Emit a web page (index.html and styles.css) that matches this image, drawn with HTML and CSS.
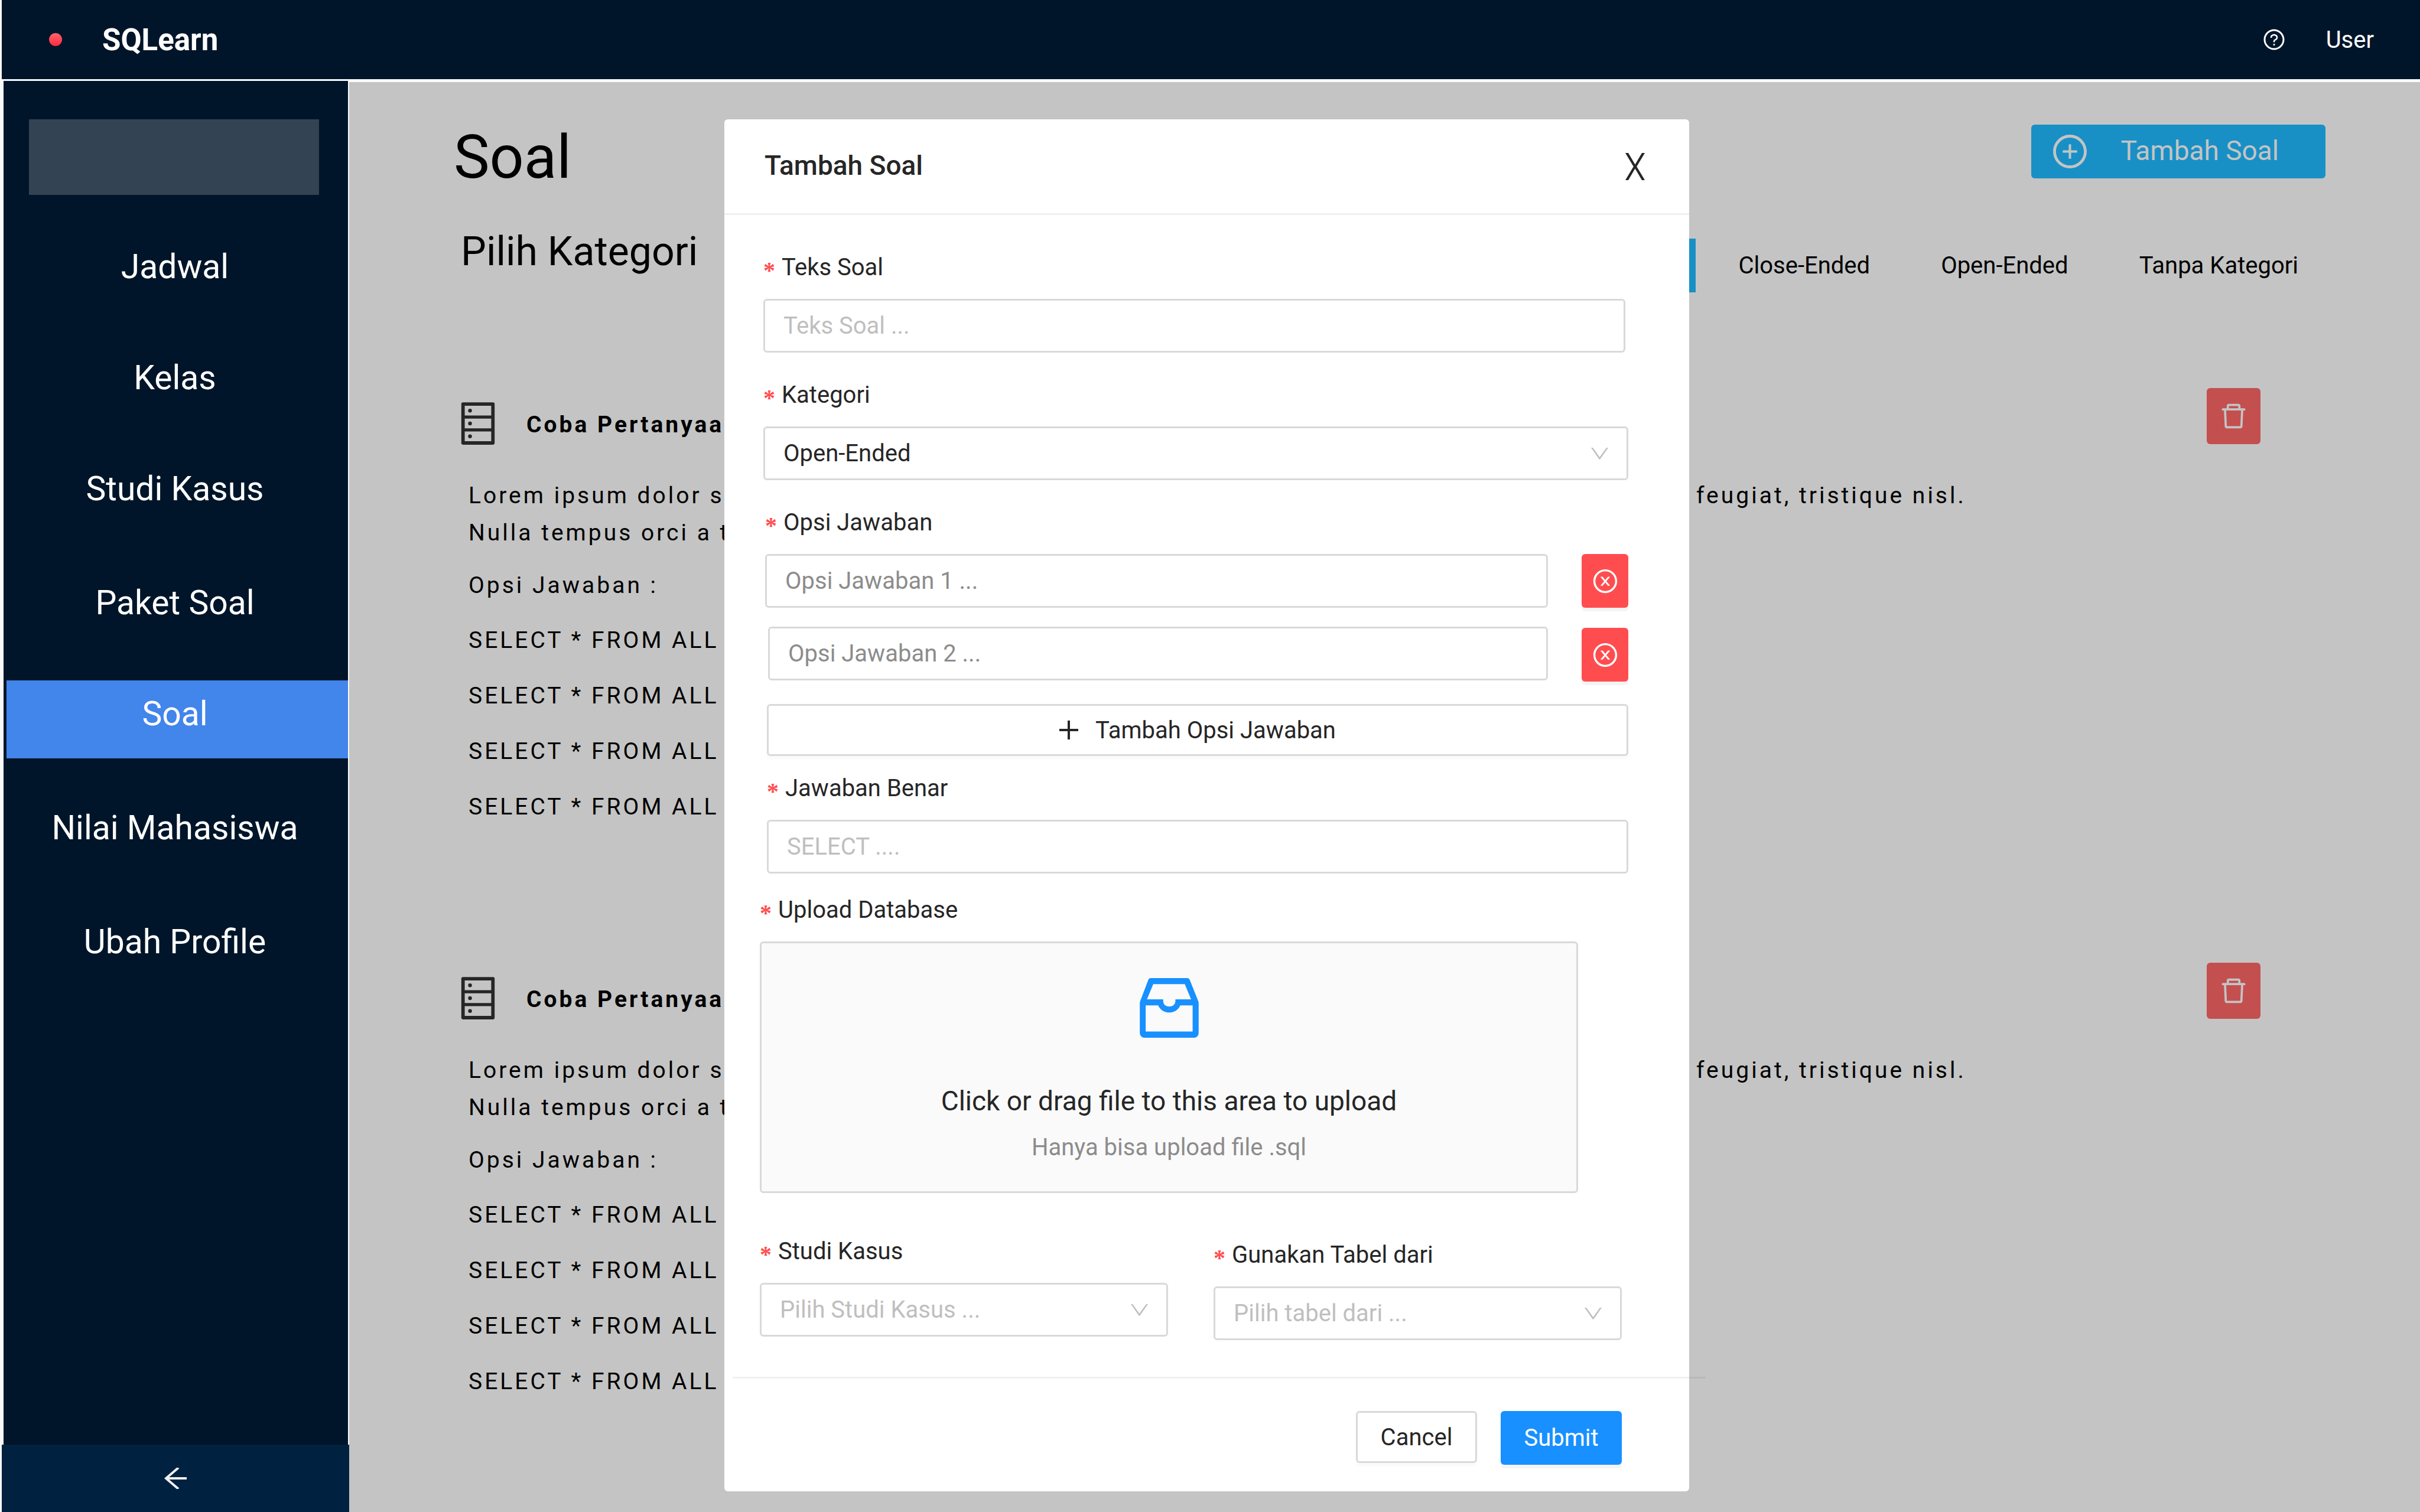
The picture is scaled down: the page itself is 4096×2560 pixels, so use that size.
FILE: index.html
```html
<!DOCTYPE html>
<html lang="id">
<head>
  <meta charset="utf-8">
  <meta name="viewport" content="width=device-width, initial-scale=1">
  <title>SQLearn - Soal</title>
  <link rel="stylesheet" href="styles.css">
</head>
<body>
  <svg class="sprite" aria-hidden="true">
    <symbol id="ring" viewBox="0 0 1024 1024"><path d="M512 64C264.600 64 64 264.600 64 512s200.600 448 448 448 448-200.600 448-448S759.400 64 512 64zm0 820c-205.400 0-372-166.600-372-372s166.600-372 372-372 372 166.600 372 372-166.600 372-372 372z"/></symbol>
    <symbol id="icon-database" viewBox="0 0 1024 1024"><path d="M832 64H192c-17.700 0-32 14.300-32 32v832c0 17.700 14.300 32 32 32h640c17.700 0 32-14.300 32-32V96c0-17.700-14.300-32-32-32zm-600 72h560v208H232V136zm560 480H232V408h560v208zm0 272H232V680h560v208zM304 240a40 40 0 1 0 80 0 40 40 0 1 0-80 0zm0 272a40 40 0 1 0 80 0 40 40 0 1 0-80 0zm0 272a40 40 0 1 0 80 0 40 40 0 1 0-80 0z"/></symbol>
    <symbol id="icon-delete" viewBox="0 0 1024 1024"><path d="M360 184h-8c4.400 0 8-3.600 8-8v8h304v-8c0 4.400 3.600 8 8 8h-8v72h72v-80c0-35.300-28.700-64-64-64H352c-35.300 0-64 28.700-64 64v80h72v-72zm504 72H160c-17.700 0-32 14.300-32 32v32c0 4.400 3.600 8 8 8h60.400l24.700 523c1.600 34.100 29.800 61 63.900 61h454c34.200 0 62.300-26.800 63.900-61l24.700-523H888c4.400 0 8-3.600 8-8v-32c0-17.700-14.300-32-32-32zM731.300 840H292.700l-24.200-512h487l-24.200 512z"/></symbol>
    <symbol id="icon-close-circle" viewBox="0 0 1024 1024"><use href="#ring"/><path d="M685.400 354.800c0-4.400-3.600-8-8-8l-66 .3L512 465.600l-99.300-118.400-66.100-.3c-4.400 0-8 3.500-8 8 0 1.900.7 3.700 1.900 5.200l130.100 155L340.500 670c-1.200 1.500-1.900 3.300-1.900 5.200 0 4.400 3.600 8 8 8l66.100-.3L512 564.400l99.300 118.400 66 .3c4.400 0 8-3.500 8-8 0-1.900-.7-3.700-1.900-5.200L553.500 515l130.100-155c1.200-1.400 1.800-3.300 1.800-5.200z"/></symbol>
    <symbol id="icon-down" viewBox="0 0 29 20"><path d="M0 0H3L14.500 16 26 0H29L15.500 19.300Q14.500 20.500 13.500 19.300z"/></symbol>
  </svg>

  <header class="topbar">
    <span class="topbar__dot"></span>
    <span class="topbar__brand">SQLearn</span>
    <a class="topbar__help" href="#bantuan" aria-label="Bantuan">
      <svg class="icon icon--help" viewBox="0 0 1024 1024" aria-hidden="true"><use href="#ring"/><path d="M623.600 316.700C593.600 290.400 554 276 512 276s-81.600 14.500-111.600 40.700C369.200 344 352 380.700 352 420v7.600c0 4.400 3.600 8 8 8h48c4.400 0 8-3.600 8-8V420c0-44.100 43.100-80 96-80s96 35.900 96 80c0 31.100-22 59.600-56.100 72.700-21.200 8.100-39.200 22.300-52.100 40.900-13.100 19-19.900 41.800-19.900 64.900V620c0 4.400 3.600 8 8 8h48c4.400 0 8-3.600 8-8v-22.700a48.300 48.300 0 0 1 30.900-44.800c59-22.700 97.100-74.700 97.100-132.500.1-39.300-17.100-76-48.300-103.300zM472 732a40 40 0 1 0 80 0 40 40 0 1 0-80 0z"/></svg>
    </a>
    <a class="topbar__user" href="#user">User</a>
  </header>

  <div class="shell">
    <aside class="sidebar">
      <nav class="sidebar__nav" aria-label="Menu utama">
        <div class="sidebar__profile"></div>
        <ul class="menu">
          <li><a class="menu__link" href="#jadwal">Jadwal</a></li>
          <li><a class="menu__link" href="#kelas">Kelas</a></li>
          <li><a class="menu__link" href="#studi-kasus">Studi Kasus</a></li>
        </ul>
        <ul class="menu">
          <li><a class="menu__link" href="#paket-soal">Paket Soal</a></li>
          <li><a class="menu__link menu__link--active" href="#soal" aria-current="page">Soal</a></li>
        </ul>
        <ul class="menu">
          <li><a class="menu__link" href="#nilai">Nilai Mahasiswa</a></li>
        </ul>
        <ul class="menu">
          <li><a class="menu__link" href="#profile">Ubah Profile</a></li>
        </ul>
      </nav>
      <button class="sidebar__collapse" type="button" aria-label="Tutup menu">
        <svg class="icon icon--back" viewBox="0 0 38 36" aria-hidden="true"><path d="M24 0L3 18L24 36M3 18H38"/></svg>
      </button>
    </aside>

    <main class="main">
      <div class="page-head">
        <h1 class="page-head__title">Soal</h1>
        <button class="add-button" type="button">
          <svg class="icon icon--add" viewBox="0 0 1024 1024" aria-hidden="true"><use href="#ring"/><path d="M696 480H544V328c0-4.400-3.600-8-8-8h-48c-4.400 0-8 3.600-8 8v152H328c-4.400 0-8 3.600-8 8v48c0 4.400 3.600 8 8 8h152v152c0 4.400 3.600 8 8 8h48c4.400 0 8-3.600 8-8V544h152c4.400 0 8-3.600 8-8v-48c0-4.400-3.600-8-8-8z"/></svg>
          <span class="add-button__text">Tambah Soal</span>
        </button>
      </div>

      <div class="category">
        <h2 class="category__title">Pilih Kategori</h2>
        <div class="category__tabs">
          <button class="tab tab--active" type="button">Semua</button>
          <div class="category__rest">
            <button class="tab" type="button">Close-Ended</button>
            <button class="tab" type="button">Open-Ended</button>
            <button class="tab" type="button">Tanpa Kategori</button>
          </div>
        </div>
      </div>

      <div class="cards">
        <article class="card">
          <div class="card__head">
            <svg class="icon icon--database" aria-hidden="true"><use href="#icon-database"/></svg>
            <h3 class="card__title">Coba Pertanyaan</h3>
            <button class="card__delete" type="button" aria-label="Hapus soal"><svg class="icon icon--delete" aria-hidden="true"><use href="#icon-delete"/></svg></button>
          </div>
          <div class="card__body">
            <p class="card__text">Lorem ipsum dolor sit amet, consectetur adipiscing elit. Etiam vitae leo et diam maximus lobortis feugiat, tristique nisl.<br>Nulla tempus orci a te.</p>
            <p class="card__text">Opsi Jawaban :</p>
            <ul class="card__options">
              <li>SELECT * FROM ALL</li>
              <li>SELECT * FROM ALL</li>
              <li>SELECT * FROM ALL</li>
              <li>SELECT * FROM ALL</li>
            </ul>
          </div>
        </article>
        <article class="card">
          <div class="card__head">
            <svg class="icon icon--database" aria-hidden="true"><use href="#icon-database"/></svg>
            <h3 class="card__title">Coba Pertanyaan</h3>
            <button class="card__delete" type="button" aria-label="Hapus soal"><svg class="icon icon--delete" aria-hidden="true"><use href="#icon-delete"/></svg></button>
          </div>
          <div class="card__body">
            <p class="card__text">Lorem ipsum dolor sit amet, consectetur adipiscing elit. Etiam vitae leo et diam maximus lobortis feugiat, tristique nisl.<br>Nulla tempus orci a te.</p>
            <p class="card__text">Opsi Jawaban :</p>
            <ul class="card__options">
              <li>SELECT * FROM ALL</li>
              <li>SELECT * FROM ALL</li>
              <li>SELECT * FROM ALL</li>
              <li>SELECT * FROM ALL</li>
            </ul>
          </div>
        </article>
      </div>
    </main>
  </div>

  <div class="overlay">
    <form class="modal" role="dialog" aria-labelledby="modal-title">
      <div class="modal__head">
        <h2 class="modal__title" id="modal-title">Tambah Soal</h2>
        <button class="modal__close" type="button" aria-label="Tutup">
          <svg class="icon icon--close" viewBox="0 0 33 46" aria-hidden="true"><path d="M0 0H5L16.500 19.500 28 0H33L19.200 23 33 46H28L16.500 26.500 5 46H0L13.800 23z"/></svg>
        </button>
      </div>

      <div class="modal__body">
        <div class="group group--question">
          <div class="field field--text">
            <label class="label" for="teks-soal"><span class="label__star">*</span>Teks Soal</label>
            <input class="input" id="teks-soal" type="text" placeholder="Teks Soal ...">
          </div>
          <div class="field">
            <label class="label" for="kategori"><span class="label__star">*</span>Kategori</label>
            <div class="select">
              <select class="input" id="kategori"><option>Open-Ended</option></select>
              <svg class="icon icon--down" aria-hidden="true"><use href="#icon-down"/></svg>
            </div>
          </div>
        </div>

        <div class="group group--options">
          <label class="label" for="opsi-1"><span class="label__star">*</span>Opsi Jawaban</label>
          <div class="options">
            <div class="options__inputs">
              <input class="input input--dark" id="opsi-1" type="text" placeholder="Opsi Jawaban 1 ...">
              <input class="input input--dark" type="text" aria-label="Opsi Jawaban 2" placeholder="Opsi Jawaban 2 ...">
            </div>
            <div class="options__actions">
              <button class="remove" type="button" aria-label="Hapus opsi 1"><svg class="icon icon--remove" aria-hidden="true"><use href="#icon-close-circle"/></svg></button>
              <button class="remove" type="button" aria-label="Hapus opsi 2"><svg class="icon icon--remove" aria-hidden="true"><use href="#icon-close-circle"/></svg></button>
            </div>
          </div>
        </div>

        <div class="group group--answer">
          <button class="add-option" type="button">
            <svg class="icon icon--plus" viewBox="0 0 32 32" aria-hidden="true"><path d="M14 0H18V14H32V18H18V32H14V18H0V14H14z"/></svg>
            <span>Tambah Opsi Jawaban</span>
          </button>
          <div class="field">
            <label class="label" for="jawaban"><span class="label__star">*</span>Jawaban Benar</label>
            <input class="input" id="jawaban" type="text" placeholder="SELECT ....">
          </div>
        </div>

        <div class="group group--upload">
          <label class="label" for="database"><span class="label__star">*</span>Upload Database</label>
          <label class="dropzone">
            <input class="dropzone__file" id="database" type="file" accept=".sql">
            <svg class="icon icon--inbox" viewBox="0 0 420 426" aria-hidden="true"><path fill-rule="evenodd" d="M78 0H337C347 0 353 5 356 12L418 167Q420 172 420 179V393A32 33 0 0 1 388 426H33A33 33 0 0 1 0 393V179Q0 173 2 167L61 12C64 4 70 0 78 0zM96 43L51 152H167V163C167 187 185 203 210 203S254 187 254 163V152H366L321 43zM42 195V382H377V195H289C275 227 245 246 210 246S145 227 131 195z"/></svg>
            <span class="dropzone__title">Click or drag file to this area to upload</span>
            <span class="dropzone__hint">Hanya bisa upload file .sql</span>
          </label>
        </div>

        <div class="pair">
          <div class="pair__item">
            <label class="label" for="studi-kasus"><span class="label__star">*</span>Studi Kasus</label>
            <div class="select">
              <select class="input input--empty" id="studi-kasus"><option>Pilih Studi Kasus ...</option></select>
              <svg class="icon icon--down" aria-hidden="true"><use href="#icon-down"/></svg>
            </div>
          </div>
          <div class="pair__item pair__item--table">
            <label class="label" for="tabel"><span class="label__star">*</span>Gunakan Tabel dari</label>
            <div class="select">
              <select class="input input--empty" id="tabel"><option>Pilih tabel dari ...</option></select>
              <svg class="icon icon--down" aria-hidden="true"><use href="#icon-down"/></svg>
            </div>
          </div>
        </div>
      </div>

      <div class="modal__foot">
        <button class="button" type="button">Cancel</button>
        <button class="button button--primary" type="submit">Submit</button>
      </div>
    </form>
  </div>
</body>
</html>
```

FILE: styles.css
```css
* {
  box-sizing: border-box;
}

body {
  position: relative;
  display: flex;
  flex-direction: column;
  min-height: 100vh;
  margin: 0;
  padding-left: 3px;
  background: #f7f9fa;
  color: #000;
  font-family: Roboto, "Liberation Sans", sans-serif;
  font-size: 40px;
}

h1, h2, h3, p, ul {
  margin: 0;
  padding: 0;
  font-weight: 400;
}

ul {
  list-style: none;
}

a {
  color: inherit;
  text-decoration: none;
}

button {
  display: flex;
  align-items: center;
  justify-content: center;
  margin: 0;
  padding: 0;
  border: 0;
  background: none;
  color: inherit;
  font: inherit;
}

.sprite {
  position: absolute;
  width: 0;
  height: 0;
}

.icon {
  display: block;
  flex: none;
  fill: currentColor;
}

.icon--help { width: 40px; height: 40px; }
.icon--back { width: 38px; height: 36px; fill: none; stroke: currentColor; stroke-width: 4; }
.icon--add { width: 65px; height: 65px; }
.icon--database { width: 82px; height: 82px; margin-top: 19px; color: #262626; }
.icon--delete { width: 53px; height: 53px; }
.icon--close { width: 33px; height: 46px; }
.icon--remove { width: 46px; height: 46px; }
.icon--plus { width: 32px; height: 32px; }
.icon--inbox { width: 100px; height: 101px; color: #1890ff; }

/* Top bar */

.topbar {
  display: flex;
  align-items: center;
  height: 134px;
  padding: 0 78px 0 80px;
  background: #001529;
  color: #fff;
}

.topbar__dot {
  width: 22px;
  height: 22px;
  border-radius: 50%;
  background: linear-gradient(#ff636f, #ff2a3b);
}

.topbar__brand {
  margin-left: 68px;
  font-size: 51px;
  font-weight: 700;
}

.topbar__help {
  margin-left: auto;
}

.topbar__user {
  margin-left: 68px;
}

/* Shell */

.shell {
  display: flex;
  flex: 1;
}

.sidebar {
  display: flex;
  flex: none;
  flex-direction: column;
  width: 588px;
  padding-top: 3px;
}

.sidebar__nav {
  flex: 1;
  margin: 0 2px 0 3px;
  padding-top: 65px;
  background: #001529;
}

.sidebar__profile {
  height: 128px;
  margin: 0 49px 65px 43px;
  background: #334354;
}

.menu {
  display: flex;
  flex-direction: column;
  gap: 56px;
  margin-bottom: 61px;
}

.menu__link {
  display: block;
  margin-left: 5px;
  padding: 24px 8px 42px 0;
  color: #fff;
  font-size: 57px;
  line-height: 66px;
  text-align: center;
}

.menu__link--active {
  background: #4285eb;
}

.sidebar__collapse {
  height: 114px;
  background: #002240;
  color: #f0f0f0;
}

.main {
  flex: 1;
  min-width: 0;
  margin-top: 5px;
  padding: 67px 160px 80px 177px;
  background: #c4c4c4;
}

.page-head,
.category {
  display: flex;
  align-items: flex-start;
  justify-content: space-between;
}

.page-head__title {
  font-size: 102px;
  line-height: 120px;
}

.add-button {
  gap: 53px;
  height: 91px;
  margin-top: 5px;
  padding: 0 79px 0 33px;
  border-radius: 6px;
  background: #1890c6;
  color: #c4c4c4;
  font-size: 46px;
}

.add-button__text {
  padding-bottom: 4px;
}

.category {
  margin-top: 60px;
  padding: 0 46px 0 12px;
}

.category__title {
  font-size: 68px;
  line-height: 80px;
}

.category__tabs {
  display: flex;
  gap: 73px;
  margin-top: 18px;
}

.category__rest {
  display: flex;
  gap: 120px;
}

.tab {
  height: 91px;
}

.tab--active {
  padding: 0 46px;
  background: #1890c6;
  color: #c4c4c4;
}

/* Question cards */

.cards {
  display: flex;
  flex-direction: column;
  gap: 232px;
  margin-top: 162px;
  padding-right: 110px;
  font-size: 39px;
  line-height: 63px;
  letter-spacing: 4px;
}

.card__head {
  display: flex;
  align-items: flex-start;
  gap: 41px;
}

.card__title {
  margin-top: 31px;
  font-size: 39px;
  font-weight: 700;
  line-height: 62px;
}

.card__delete {
  width: 91px;
  height: 95px;
  margin-left: auto;
  border-radius: 6px;
  background: #c44f4f;
  color: #c4c4c4;
}

.card__body {
  display: flex;
  flex-direction: column;
  gap: 26px;
  margin: 50px 0 0 25px;
}

.card__options {
  display: flex;
  flex-direction: column;
  gap: 31px;
  padding-top: 4px;
}

/* Modal */

.overlay {
  position: absolute;
  inset: 202px 0 auto 0;
  display: flex;
  justify-content: center;
  padding: 0 11px 34px 0;
}

.modal {
  width: 1633px;
  max-width: 100%;
  border-radius: 6px;
  background: #fff;
  color: #262626;
}

.modal__head {
  display: flex;
  align-items: center;
  justify-content: space-between;
  height: 162px;
  padding: 0 75px 0 68px;
  border-bottom: 3px solid #f0f0f0;
}

.modal__title {
  padding-bottom: 4px;
  font-size: 46px;
  font-weight: 500;
}

.modal__body {
  padding: 58px 103px 68px 60px;
}

.group--question {
  display: flex;
  flex-direction: column;
  gap: 41px;
  margin-left: 6px;
}

.field--text {
  margin-right: 5px;
}

.group--options {
  margin: 41px 0 0 9px;
}

.group--answer {
  display: flex;
  flex-direction: column;
  gap: 24px;
  margin: 40px 0 0 12px;
}

.group--upload {
  margin: 31px 85px 0 0;
}

.label {
  display: flex;
  gap: 11px;
  height: 62px;
  margin-bottom: 22px;
  line-height: 62px;
}

.label__star {
  color: #ff4d4f;
  font-family: "Liberation Serif", serif;
  font-weight: 700;
  line-height: 72px;
}

.input {
  display: block;
  width: 100%;
  height: 91px;
  margin: 0;
  padding: 0 31px;
  border: 3px solid #d9d9d9;
  border-radius: 6px;
  background: #fff;
  color: #262626;
  font: inherit;
  appearance: none;
}

.input::placeholder {
  color: #bfbfbf;
  opacity: 1;
}

.input--dark::placeholder {
  color: #8c8c8c;
}

.input--empty {
  color: #bfbfbf;
}

.select {
  position: relative;
}

.icon--down {
  position: absolute;
  top: 36px;
  right: 34px;
  width: 29px;
  height: 20px;
  color: #bfbfbf;
  pointer-events: none;
}

.options {
  display: flex;
  gap: 57px;
}

.options__inputs {
  display: flex;
  flex: 1;
  flex-direction: column;
  align-items: flex-end;
  gap: 32px;
}

.options__inputs .input + .input {
  width: calc(100% - 5px);
}

.options__actions {
  display: flex;
  flex-direction: column;
  gap: 34px;
  height: 214px;
}

.remove {
  width: 79px;
  height: 91px;
  flex: none;
  border-radius: 6px;
  background: #ff4d4f;
  box-shadow: 0 6px 0 rgba(0, 0, 0, 0.045);
  color: #fff;
}

.add-option {
  gap: 29px;
  height: 88px;
  border: 3px solid #d9d9d9;
  border-radius: 6px;
  background: #fff;
  box-shadow: 0 6px 0 rgba(0, 0, 0, 0.016);
}

.dropzone {
  position: relative;
  display: flex;
  flex-direction: column;
  align-items: center;
  padding: 59px 20px 43px;
  border: 3px solid #d9d9d9;
  border-radius: 6px;
  background: #fafafa;
}

.dropzone__file {
  position: absolute;
  width: 1px;
  height: 1px;
  opacity: 0;
}

.dropzone__title {
  margin-top: 73px;
  font-size: 46px;
  line-height: 68px;
}

.dropzone__hint {
  margin-top: 14px;
  color: #8c8c8c;
  line-height: 62px;
}

.pair {
  display: grid;
  grid-template-columns: 1fr 1fr;
  gap: 77px;
  margin: 68px 11px 0 0;
}

.pair__item--table {
  padding-top: 6px;
  margin-bottom: -6px;
}

.modal__foot {
  display: flex;
  align-items: flex-start;
  justify-content: flex-end;
  gap: 40px;
  margin: 0 -28px 0 14px;
  padding: 55px 142px 45px 0;
  border-top: 3px solid rgba(0, 0, 0, 0.06);
}

.button {
  width: 205px;
  height: 88px;
  border: 3px solid #d9d9d9;
  border-radius: 6px;
  background: #fff;
  box-shadow: 0 6px 0 rgba(0, 0, 0, 0.016);
}

.button--primary {
  height: 91px;
  border-color: #1890ff;
  background: #1890ff;
  box-shadow: 0 6px 0 rgba(0, 0, 0, 0.045);
  color: #fff;
}
```
